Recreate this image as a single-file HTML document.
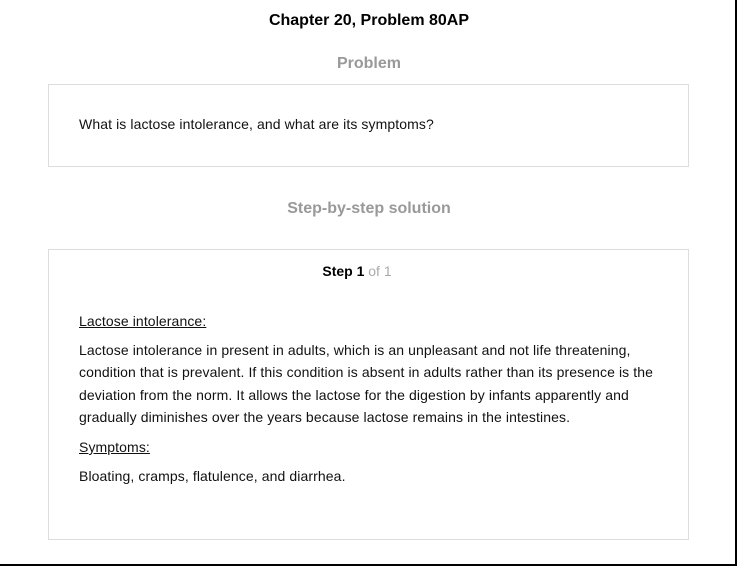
<!DOCTYPE html>
<html><head><style>
body{margin:0;width:738px;height:567px;background:#fff;font-family:"Liberation Sans",Arial,sans-serif;position:relative;overflow:hidden}
.frame{position:absolute;left:0;top:0;width:735px;height:564px;border-right:2px solid #000;border-bottom:2px solid #000}
.t{position:absolute;left:0;width:738px;text-align:center;font-weight:bold}
.box{position:absolute;left:48px;width:639px;border:1px solid #ddd}
.p{position:absolute;left:79px;font-size:14px;color:#111;letter-spacing:0.1px}
u{text-decoration:underline}
</style></head><body>
<div class="frame"></div>
<div class="t" style="top:12px;font-size:16px;color:#000">Chapter 20, Problem 80AP</div>
<div class="t" style="top:55px;font-size:16px;color:#999">Problem</div>
<div class="box" style="top:84px;height:81px"></div>
<div class="p" style="top:116px">What is lactose intolerance, and what are its symptoms?</div>
<div class="t" style="top:200px;font-size:16px;color:#999">Step-by-step solution</div>
<div class="box" style="top:249px;height:289px"></div>
<div class="t" style="top:263px;font-size:14px;color:#000;left:-12px">Step 1 <span style="font-weight:normal;color:#aaa">of 1</span></div>
<div class="p" style="top:313px"><u>Lactose intolerance:</u></div>
<div class="p" style="top:339px;line-height:22.3px;width:590px">Lactose intolerance in present in adults, which is an unpleasant and not life threatening, condition that is prevalent. If this condition is absent in adults rather than its presence is the deviation from the norm. It allows the lactose for the digestion by infants apparently and gradually diminishes over the years because lactose remains in the intestines.</div>
<div class="p" style="top:439px"><u>Symptoms:</u></div>
<div class="p" style="top:468px">Bloating, cramps, flatulence, and diarrhea.</div>
</body></html>
